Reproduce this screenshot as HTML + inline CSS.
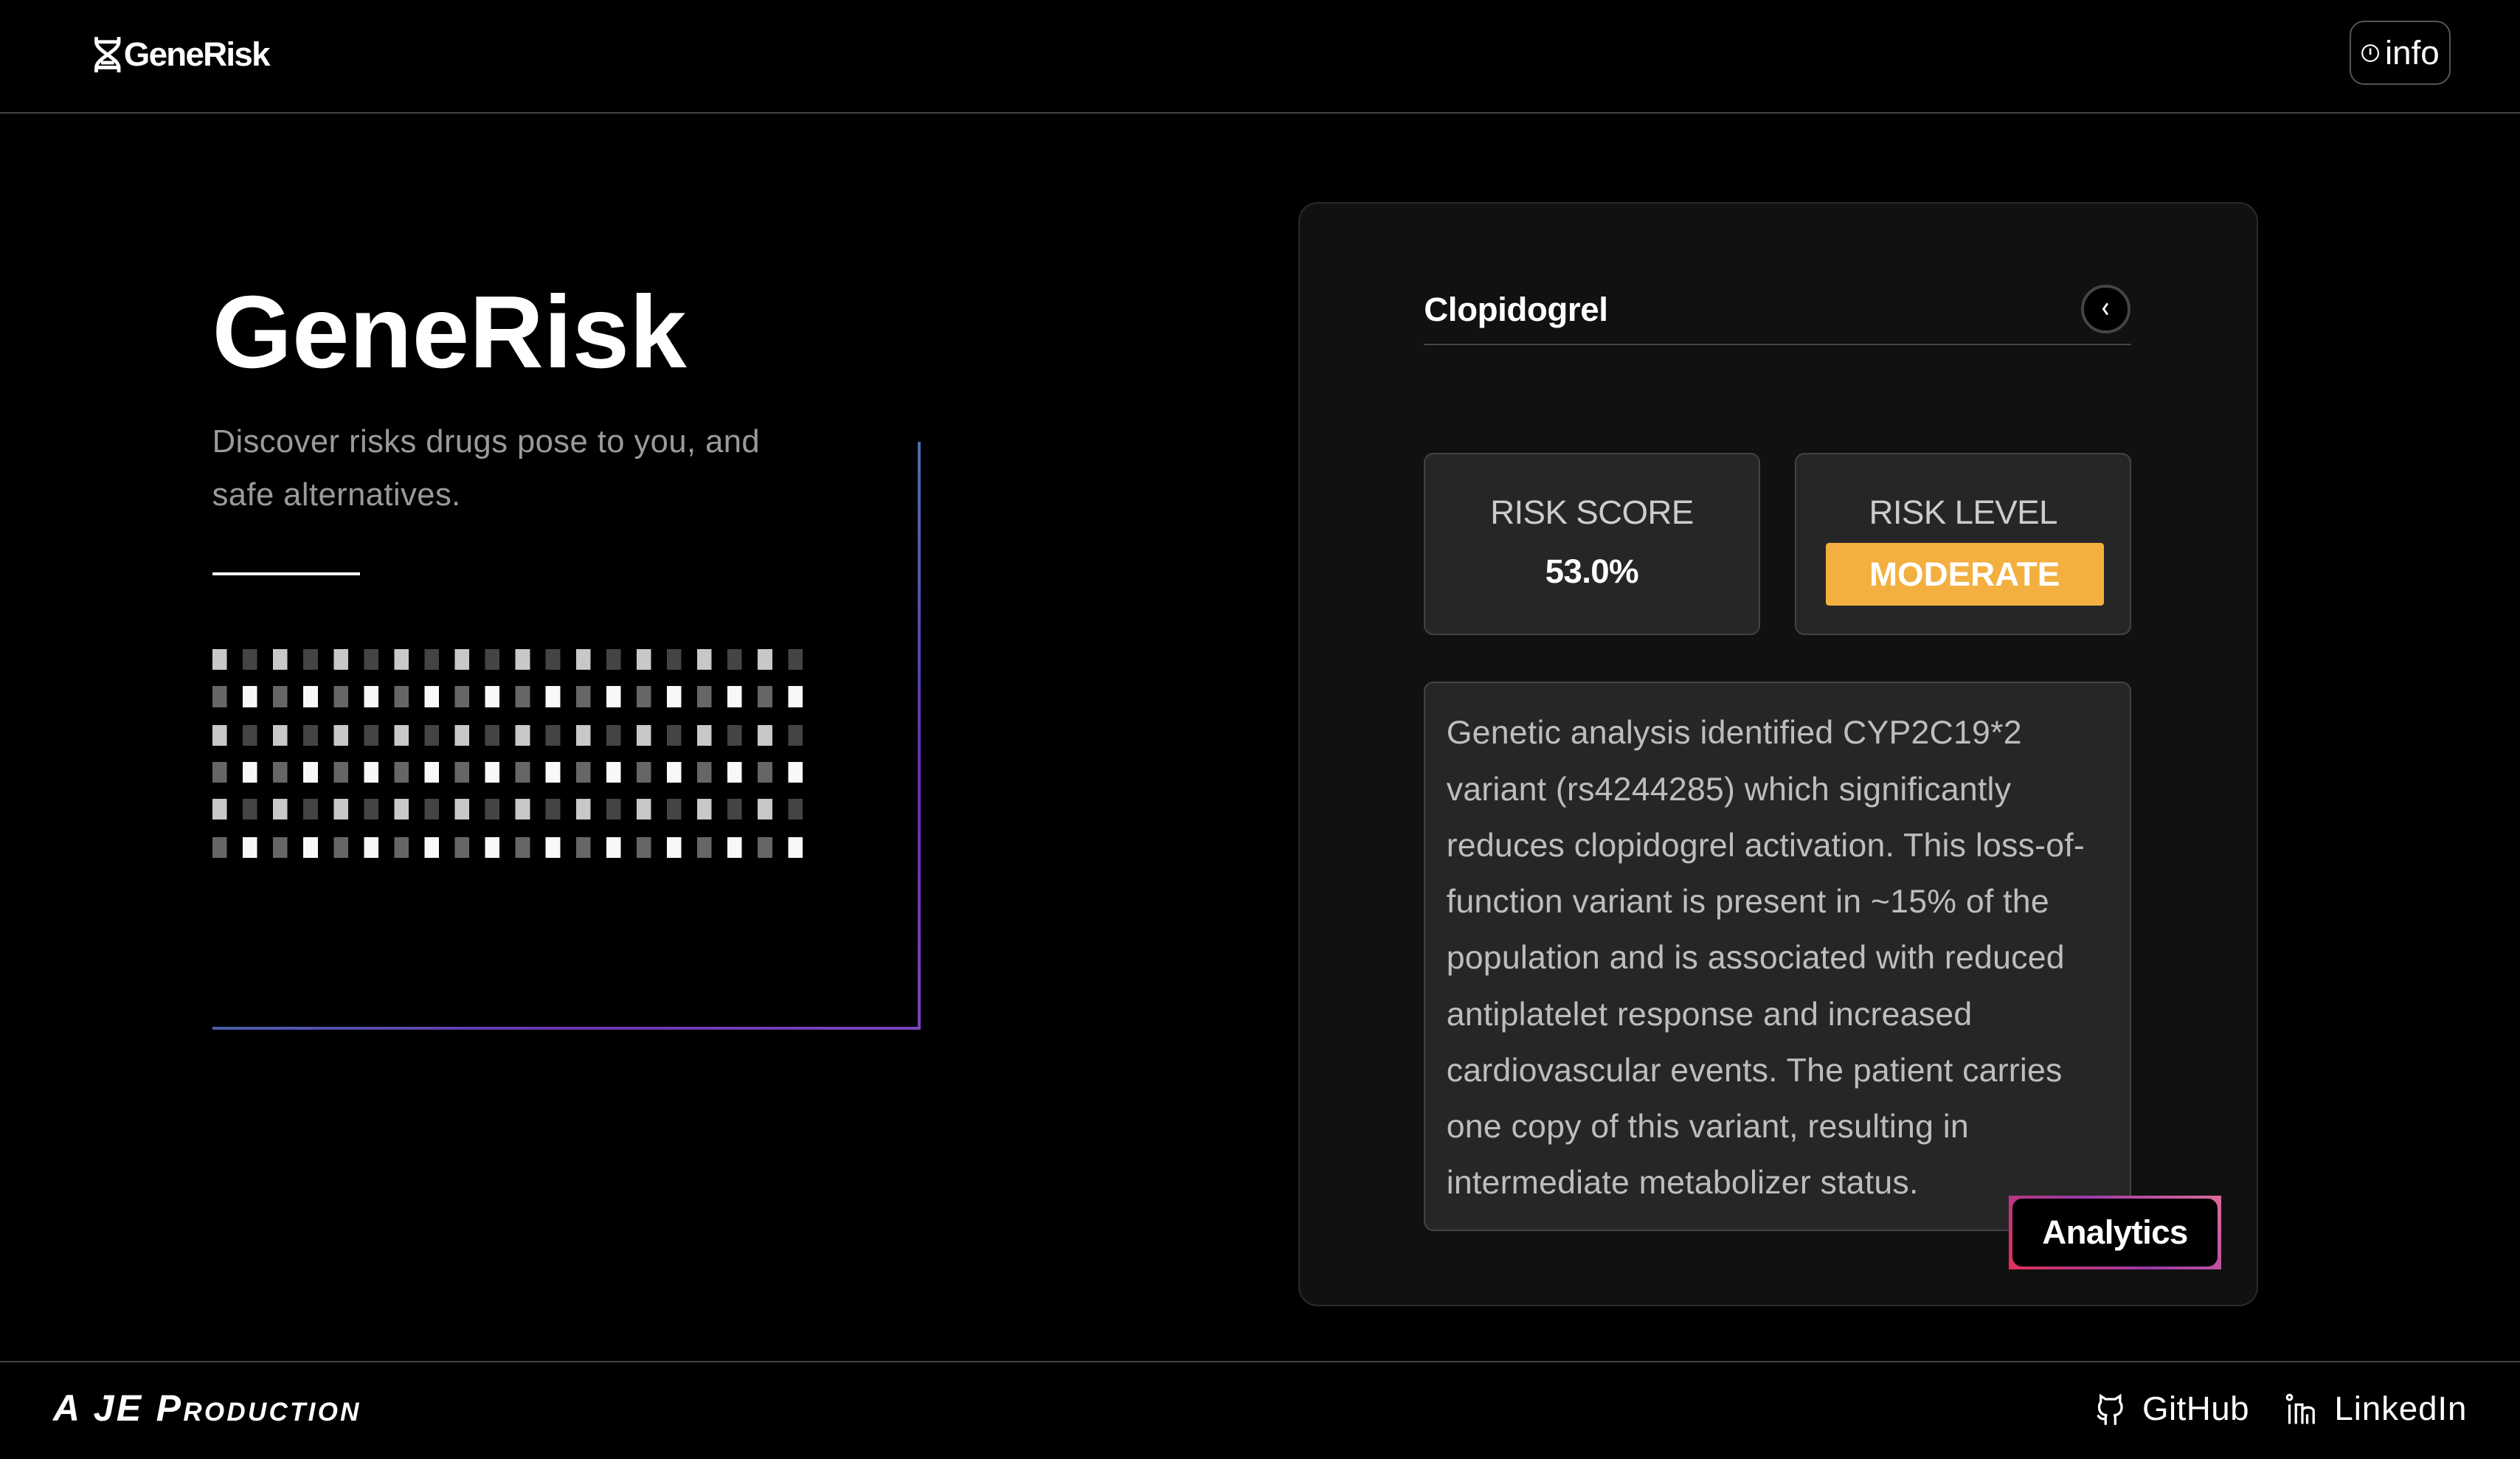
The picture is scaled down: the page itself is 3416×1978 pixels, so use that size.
<!DOCTYPE html>
<html><head><meta charset="utf-8"><style>
html,body{margin:0;padding:0;background:#000;}
body{width:1568px;height:905px;zoom:2.17857;position:relative;overflow:hidden;font-family:"Liberation Sans",sans-serif;color:#fff;}
.abs{position:absolute;}
.hdr{left:0;top:0;width:1568px;height:70px;border-bottom:1px solid #444;}
.logo{left:57px;top:22px;font-size:21px;font-weight:bold;letter-spacing:-0.8px;display:flex;align-items:center;}
.info{left:1462px;top:13px;width:61px;height:38px;border:1px solid #555;border-radius:9px;display:flex;align-items:center;justify-content:center;font-size:21px;}
.title{left:132px;top:170px;font-size:64px;font-weight:bold;letter-spacing:0px;}
.sub{left:132px;top:259px;font-size:20px;line-height:33px;color:#9a9a9a;letter-spacing:0.2px;}
.row{left:132px;width:377px;height:13px;}
.r1{background:repeating-linear-gradient(90deg,#c8c8c8 0 9px,transparent 9px 18.85px,#444 18.85px 27.85px,transparent 27.85px 37.7px);}
.r2{background:repeating-linear-gradient(90deg,#666 0 9px,transparent 9px 18.85px,#f8f8f8 18.85px 27.85px,transparent 27.85px 37.7px);}
.card{left:808px;top:126px;width:597px;height:687px;background:#111;border:1px solid #2a2a2a;border-radius:12px;box-sizing:border-box;}
.box{background:#262626;border:1px solid #444;border-radius:6px;box-sizing:border-box;}
.lbl{font-size:21px;color:#ccc;text-align:center;width:100%;letter-spacing:-0.3px;}
.desc{left:900px;top:439px;font-size:20.5px;line-height:35px;color:#bdbdbd;white-space:nowrap;letter-spacing:0.1px;}
.foot{left:0;top:847px;width:1568px;border-top:1px solid #444;height:60px;}
</style></head><body>
<div class="abs hdr"></div>
<div class="abs logo"><svg width="20" height="24" viewBox="0 0 20 24" fill="none" stroke="#fff" stroke-width="2.2"><path d="M3 1v3c0 6 14 10 14 16v3M17 1v3c0 6-14 10-14 16v3M4 4h12M6 17h8M4 20h12"/></svg><span>GeneRisk</span></div>
<div class="abs info"><svg width="12" height="12" viewBox="0 0 12 12" style="margin-right:3px"><circle cx="6" cy="6" r="5" fill="none" stroke="#fff" stroke-width="1"/><path d="M6 3v4" stroke="#fff" stroke-width="1.2"/></svg>info</div>

<div class="abs title">GeneRisk</div>
<div class="abs sub">Discover risks drugs pose to you, and<br>safe alternatives.</div>
<div class="abs" style="left:132px;top:356px;width:92px;height:2px;background:#fff"></div>

<div class="abs row r1" style="top:404px"></div>
<div class="abs row r2" style="top:427px"></div>
<div class="abs row r1" style="top:451px"></div>
<div class="abs row r2" style="top:474px"></div>
<div class="abs row r1" style="top:497px"></div>
<div class="abs row r2" style="top:521px"></div>

<div class="abs" style="left:571px;top:275px;width:2px;height:366px;background:linear-gradient(#4a70a8,#5a3fb0 40%,#6a2cb5 60%,#7a45b8)"></div>
<div class="abs" style="left:132px;top:639px;width:441px;height:2px;background:linear-gradient(90deg,#4a5fa8,#6a35b0 50%,#7a45b8)"></div>

<div class="abs card"></div>
<div class="abs" style="left:886px;top:181px;font-size:21px;font-weight:bold;letter-spacing:-0.2px">Clopidogrel</div>
<div class="abs" style="left:886px;top:214px;width:440px;height:1px;background:#444"></div>
<div class="abs" style="left:1295px;top:177px;width:27px;height:27px;border:2px solid #444;border-radius:50%;background:#000;display:flex;align-items:center;justify-content:center"><svg width="8" height="10" viewBox="0 0 8 10"><path d="M5 1.5L2.5 5L5 8.5" stroke="#fff" stroke-width="1.3" fill="none"/></svg></div>

<div class="abs box" style="left:886px;top:282px;width:209px;height:113px">
<div class="abs lbl" style="top:24px">RISK SCORE</div>
<div class="abs lbl" style="top:61px;color:#fff;font-weight:bold">53.0%</div></div>
<div class="abs box" style="left:1117px;top:282px;width:209px;height:113px">
<div class="abs lbl" style="top:24px">RISK LEVEL</div>
<div class="abs" style="left:18px;top:55px;width:173px;height:39px;background:#f3b040;border-radius:2px;font-size:21px;font-weight:bold;display:flex;align-items:center;justify-content:center">MODERATE</div></div>

<div class="abs box" style="left:886px;top:424px;width:440px;height:342px"></div>
<div class="abs desc">Genetic analysis identified CYP2C19*2<br>variant (rs4244285) which significantly<br>reduces clopidogrel activation. This loss-of-<br>function variant is present in ~15% of the<br>population and is associated with reduced<br>antiplatelet response and increased<br>cardiovascular events. The patient carries<br>one copy of this variant, resulting in<br>intermediate metabolizer status.</div>

<div class="abs" style="left:1250px;top:744px;width:132px;height:46px;box-sizing:border-box;padding:2px;background:linear-gradient(45deg,#e0305a,#9a3aa8 50%,#e06a9a)"><div style="width:100%;height:100%;background:#000;border-radius:6px;display:flex;align-items:center;justify-content:center;font-size:21px;font-weight:bold;letter-spacing:-0.3px">Analytics</div></div>

<div class="abs foot"></div>
<div class="abs" style="left:33px;top:863px;font-size:23px;font-weight:bold;font-style:italic;font-variant:small-caps;letter-spacing:1.5px;font-family:'Liberation Sans',sans-serif">A JE Production</div>
<div class="abs" style="left:1303px;top:865px;display:flex;align-items:center;font-size:21px">
<svg width="20" height="22" viewBox="0 0 20 22" fill="none" stroke="#fff" stroke-width="1.5"><path d="M7 21v-4c-3 1-4-1-5-2M13 21v-4c0-1 0-2-1-2 3 0 5-2 5-5 0-1 0-2-1-3V3l-3 2H7L4 3v4C3 8 3 9 3 10c0 3 2 5 5 5-1 0-1 1-1 2"/></svg>
<span style="margin-left:10px;letter-spacing:0.2px">GitHub</span>
<svg style="margin-left:22px" width="22" height="20" viewBox="0 0 22 20" fill="none" stroke="#fff" stroke-width="1.5"><circle cx="3" cy="2.5" r="1.5"/><path d="M3 7v12M7 19V7h4v12M11 11c0-3 7-3 7 0v8M14 19v-6"/></svg>
<span style="margin-left:9px;letter-spacing:0.4px">LinkedIn</span></div>
</body></html>
